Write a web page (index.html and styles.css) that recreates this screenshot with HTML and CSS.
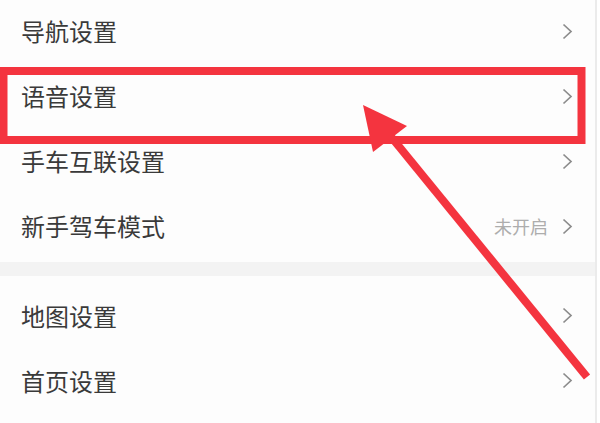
FILE: index.html
```html
<!DOCTYPE html>
<html lang="zh-CN">
<head>
<meta charset="utf-8">
<title>设置</title>
<link rel="stylesheet" href="styles.css">
</head>
<body>
<div class="screen">
  <div class="card card-top">
    <div class="row"><span class="label">导航设置</span><svg class="chev" viewBox="0 0 11 17"><polyline points="1.5,1.5 9,8.5 1.5,15.5"/></svg></div>
    <div class="row"><span class="label">语音设置</span><svg class="chev" viewBox="0 0 11 17"><polyline points="1.5,1.5 9,8.5 1.5,15.5"/></svg></div>
    <div class="row"><span class="label">手车互联设置</span><svg class="chev" viewBox="0 0 11 17"><polyline points="1.5,1.5 9,8.5 1.5,15.5"/></svg></div>
    <div class="row"><span class="label">新手驾车模式</span><span class="value">未开启</span><svg class="chev" viewBox="0 0 11 17"><polyline points="1.5,1.5 9,8.5 1.5,15.5"/></svg></div>
  </div>
  <div class="divider"></div>
  <div class="card card-bottom">
    <div class="row"><span class="label">地图设置</span><svg class="chev" viewBox="0 0 11 17"><polyline points="1.5,1.5 9,8.5 1.5,15.5"/></svg></div>
    <div class="row"><span class="label">首页设置</span><svg class="chev" viewBox="0 0 11 17"><polyline points="1.5,1.5 9,8.5 1.5,15.5"/></svg></div>
  </div>
  <svg class="annotation" viewBox="0 0 600 423" width="600" height="423">
    <rect class="mark" x="3.5" y="71" width="578" height="69"/>
    <line class="shaft" x1="388" y1="133" x2="587" y2="377"/>
    <polygon class="head" points="363,105 407,126 373,152"/>
  </svg>
</div>
</body>
</html>
```
FILE: styles.css
```css
html, body {
  margin: 0;
  padding: 0;
  background: #ffffff;
}
.screen {
  position: relative;
  width: 595px;
  height: 423px;
  overflow: hidden;
  background: #fdfdfd;
  border-right: 2px solid #ebebeb;
  font-family: "Noto Sans CJK SC", "Noto Sans", sans-serif;
  color: #3a3a3a;
}
.card {
  background: #fdfdfd;
}
.card-top {
  margin-top: -1.5px;
  padding-bottom: 3.5px;
}
.card-bottom {
  padding-top: 7px;
}
.divider {
  height: 14px;
  background: #f3f3f3;
}
.row {
  display: flex;
  align-items: center;
  height: 65px;
  padding: 0 22px 0 21px;
}
.label {
  flex: 1;
  font-size: 24px;
  line-height: 1;
  color: #3a3a3a;
}
.value {
  font-size: 18px;
  color: #adadad;
  margin-right: 14px;
}
.chev {
  width: 11px;
  height: 17px;
  fill: none;
  stroke: #8c8c8c;
  stroke-width: 1.7;
}
.annotation {
  position: absolute;
  left: 0;
  top: 0;
}
.mark {
  fill: none;
  stroke: #f4343f;
  stroke-width: 8;
}
.shaft {
  stroke: #f4343f;
  stroke-width: 8;
}
.head {
  fill: #f4343f;
}
```
